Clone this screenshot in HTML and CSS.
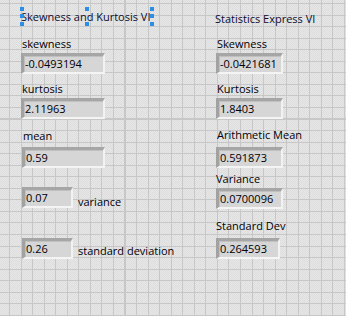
FILE: index.html
```html
<!DOCTYPE html>
<html>
<head>
<meta charset="utf-8">
<link rel="stylesheet" href="styles.css">
</head>
<body>
<div class="panel">
  <div class="col col-left">
    <div class="vi-title selected">Skewness and Kurtosis VI
      <span class="handle h-tl"></span><span class="handle h-tm"></span><span class="handle h-tr"></span>
      <span class="handle h-ml"></span><span class="handle h-mr"></span>
      <span class="handle h-bl"></span><span class="handle h-bm"></span><span class="handle h-br"></span>
    </div>
    <div class="label l-skew">skewness</div>
    <div class="ind w84 g2">-0.0493194</div>
    <div class="label l-kurt">kurtosis</div>
    <div class="ind w84 g2">2.11963</div>
    <div class="label l-mean">mean</div>
    <div class="ind w83 g4 shift1">0.59</div>
    <div class="row row-var">
      <div class="ind w51 shift1">0.07</div>
      <div class="side-label sl-var">variance</div>
    </div>
    <div class="row row-sd">
      <div class="ind w51 shift1">0.26</div>
      <div class="side-label sl-sd">standard deviation</div>
    </div>
  </div>
  <div class="col col-right">
    <div class="express-title">Statistics Express VI</div>
    <div class="label rl-skew">Skewness</div>
    <div class="ind w67 g2 shift1">-0.0421681</div>
    <div class="label rl-kurt">Kurtosis</div>
    <div class="ind w67 g2 shift1">1.8403</div>
    <div class="label rl-mean">Arithmetic Mean</div>
    <div class="ind w67 g5 shift1">0.591873</div>
    <div class="label rl-var">Variance</div>
    <div class="ind w67 g2 shift1">0.0700096</div>
    <div class="label rl-sd">Standard Dev</div>
    <div class="ind w64 g5 shift1">0.264593</div>
  </div>
</div>
</body>
</html>
```
FILE: styles.css
```css
html, body {
  margin: 0;
  padding: 0;
}

body {
  font-family: "Open Sans", "Liberation Sans", sans-serif;
  font-size: 11px;
  color: #000008;
}

.panel {
  width: 346px;
  height: 316px;
  display: flex;
  background-color: #e2e2e2;
  background-image:
    repeating-linear-gradient(to right, #c7c7c7 0 1px, transparent 1px 11.55px),
    repeating-linear-gradient(to bottom, #c7c7c7 0 1px, transparent 1px 11.55px),
    repeating-conic-gradient(#e7e7e7 0 25%, #dddddd 0 50%);
  background-size: auto, auto, 2px 2px;
  background-position: 9px 3px, 9px 3px, 0 0;
  overflow: hidden;
}

.col {
  display: flex;
  flex-direction: column;
  align-items: flex-start;
}

.col-left {
  width: 194px;
  padding-left: 21px;
}

.col-right {
  flex: 1;
}

.vi-title {
  position: relative;
  margin-top: 8px;
  width: 131px;
  height: 14px;
  padding-top: 2px;
  line-height: 14px;
  white-space: nowrap;
  color: #0c0c30;
}

.handle {
  position: absolute;
  width: 4px;
  height: 4px;
  background: #2b8fe6;
}
.h-tl { left: -1px; top: -1px; }
.h-tm { left: 64px; top: -1px; }
.h-tr { left: 129px; top: -1px; }
.h-ml { left: -1px; top: 6px; }
.h-mr { left: 129px; top: 6px; }
.h-bl { left: -1px; top: 14px; }
.h-bm { left: 64px; top: 14px; }
.h-br { left: 129px; top: 14px; }

.label,
.side-label,
.express-title {
  line-height: 14px;
  white-space: nowrap;
}

.label { margin-left: 1px; }

.l-skew { margin-top: 13px; }
.l-kurt { margin-top: 8px; }
.l-mean { margin-top: 10px; margin-left: 2px; }

.express-title {
  margin-top: 12px;
  color: #0c0c30;
}
.rl-skew { margin-top: 11px; margin-left: 2px; }
.rl-kurt { margin-top: 8px; margin-left: 2px; }
.rl-mean { margin-top: 9px; margin-left: 2px; }
.rl-var { margin-top: 4px; }
.rl-sd { margin-top: 10px; }

.ind {
  box-sizing: border-box;
  height: 21px;
  padding: 1px 0 0 1px;
  line-height: 14px;
  white-space: nowrap;
  background: #d6d6d6;
  border-style: solid;
  border-width: 3px 2px 2px 3px;
  border-color: #a6a6a6 #f2f2f2 #f4f4f4 #a2a2a2;
  box-shadow: inset 1px 1px 0 #c0c0c0;
}

.g2 { margin-top: 2px; }
.g4 { margin-top: 4px; }
.g5 { margin-top: 5px; }
.shift1 { margin-left: 1px; }

.w84 { width: 84px; }
.w83 { width: 83px; }
.w51 { width: 51px; }
.w67 { width: 67px; }
.w64 { width: 64px; }

.row {
  display: flex;
  align-items: flex-start;
}
.row-var { margin-top: 19px; }
.row-sd { margin-top: 29px; }

.side-label { margin-left: 5px; }
.sl-var { margin-top: 8px; }
.sl-sd { margin-top: 6px; }
```
